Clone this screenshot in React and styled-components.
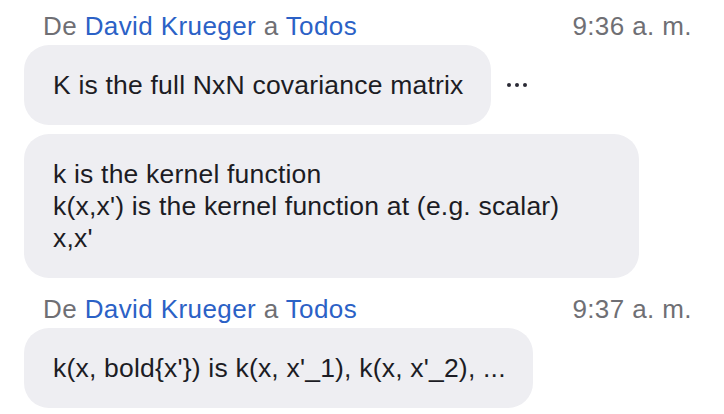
import React from "react";
import styled, { createGlobalStyle } from "styled-components";

const messages = [
  {
    from: "David Krueger",
    to: "Todos",
    time: "9:36 a. m.",
    bubbles: [
      { lines: ["K is the full NxN covariance matrix"], more: true },
      {
        lines: [
          "k is the kernel function",
          "k(x,x') is the kernel function at (e.g. scalar)",
          "x,x'",
        ],
        width: 615,
      },
    ],
  },
  {
    from: "David Krueger",
    to: "Todos",
    time: "9:37 a. m.",
    bubbles: [{ lines: ["k(x, bold{x'}) is k(x, x'_1), k(x, x'_2), ..."] }],
  },
];

export default function App() {
  return (
    <>
      <GlobalStyle />
      <ChatList>
        {messages.map((msg, i) => (
          <Group key={i}>
            <Header>
              <Sender>
                De <Name>{msg.from}</Name> a <Name>{msg.to}</Name>
              </Sender>
              <Time>{msg.time}</Time>
            </Header>
            <Bubbles>
              {msg.bubbles.map((b, j) => (
                <BubbleRow key={j}>
                  <Bubble $width={b.width}>
                    {b.lines.map((line, k) => (
                      <Line key={k}>{line}</Line>
                    ))}
                  </Bubble>
                  {b.more && (
                    <More>
                      <Dot />
                      <Dot />
                      <Dot />
                    </More>
                  )}
                </BubbleRow>
              ))}
            </Bubbles>
          </Group>
        ))}
      </ChatList>
    </>
  );
}

const GlobalStyle = createGlobalStyle`
  body {
    margin: 0;
    background: #ffffff;
    font-family: "Liberation Sans", Arial, sans-serif;
  }
`;

const ChatList = styled.div`
  width: 724px;
  padding: 11px 32px 0 24px;
  box-sizing: border-box;
  display: flex;
  flex-direction: column;
  gap: 16px;
`;

const Group = styled.div`
  display: flex;
  flex-direction: column;
  gap: 4px;
`;

const Header = styled.div`
  display: flex;
  justify-content: space-between;
  align-items: baseline;
  padding-left: 19px;
  font-size: 26px;
  letter-spacing: 0.4px;
  line-height: 30px;
  color: #6f6f74;
`;

const Sender = styled.div``;

const Name = styled.span`
  color: #2b61c6;
`;

const Time = styled.div`
  color: #6f6f74;
`;

const Bubbles = styled.div`
  display: flex;
  flex-direction: column;
  gap: 9px;
`;

const BubbleRow = styled.div`
  display: flex;
  align-items: center;
`;

const Bubble = styled.div`
  box-sizing: border-box;
  width: ${(p) => (p.$width ? `${p.$width}px` : "auto")};
  background: #eeeef2;
  border-radius: 25px;
  padding: 24px 27px 24px 29px;
  color: #1c1c24;
  font-size: 26.5px;
  letter-spacing: 0.2px;
  line-height: 32px;
`;

const Line = styled.div`
  white-space: nowrap;
`;

const More = styled.div`
  display: flex;
  gap: 4px;
  margin-left: 16px;
`;

const Dot = styled.span`
  width: 4px;
  height: 4px;
  border-radius: 50%;
  background: #2a2a35;
`;
